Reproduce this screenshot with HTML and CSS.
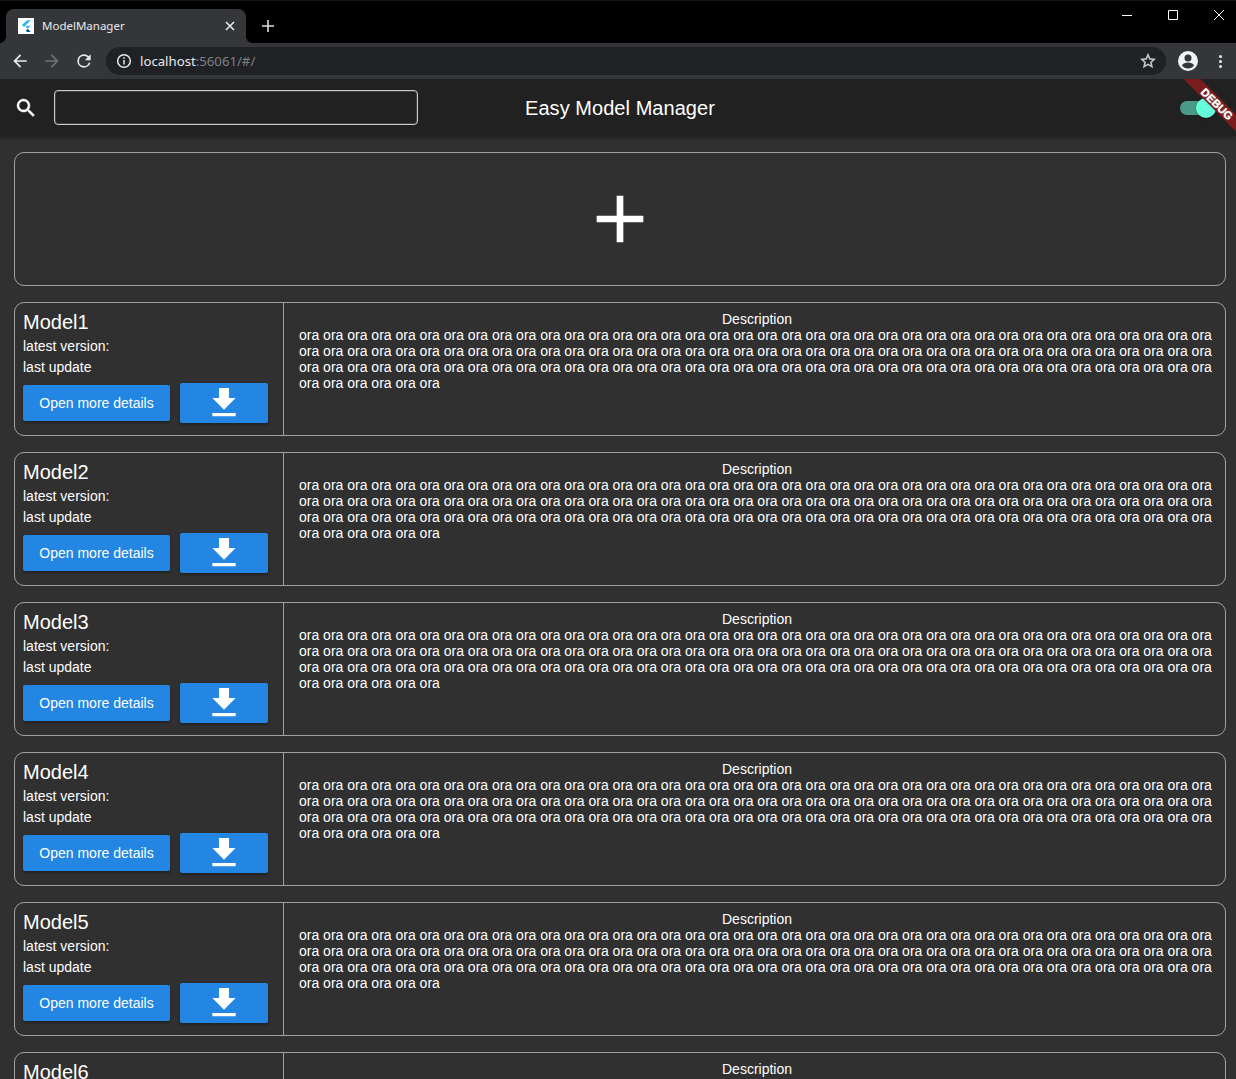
FILE: index.html
```html
<!DOCTYPE html>
<html lang="en">

<head>
    <meta charset="UTF-8">
    <meta name="viewport" content="width=device-width, initial-scale=1.0">
    <title>ModelManager</title>
    <link rel="stylesheet" href="styles.css">
</head>

<body>
    <svg class="icon-defs" width="0" height="0">
        <symbol id="download" viewBox="0 0 24 24"><path d="M19 9h-4V3H9v6H5l7 7 7-7zM5 18v2h14v-2H5z" /></symbol>
    </svg>

    <div class="tabstrip">
        <div class="tab">
            <span class="favicon">
                <svg width="16" height="16" viewBox="0 0 16 16">
                    <path fill="#29b6f6" d="M9 2.300h3.700L6 9 4 7.100z" />
                    <path fill="#29b6f6" d="M8.900 7.800h3.800l-2.900 3-2-1.900z" />
                    <path fill="#01579b" d="M7.800 12.600l2-1.800 2.900 3.200H9z" />
                </svg>
            </span>
            <span class="tab-title">ModelManager</span>
            <svg class="tab-close" width="10" height="10" viewBox="0 0 10 10">
                <path d="M1 1l8 8M9 1l-8 8" />
            </svg>
        </div>
        <svg class="new-tab" width="12" height="12" viewBox="0 0 12 12">
            <path d="M6 0v12M0 6h12" />
        </svg>
        <div class="window-controls">
            <svg width="10" height="10" viewBox="0 0 10 10"><path d="M0 5.500h10" /></svg>
            <svg width="10" height="10" viewBox="0 0 10 10"><path d="M.5.500h9v9h-9z" /></svg>
            <svg width="10" height="10" viewBox="0 0 10 10"><path d="M0 0l10 10M10 0L0 10" /></svg>
        </div>
    </div>

    <div class="toolbar">
        <svg class="nav-icon" width="24" height="24" viewBox="0 0 24 24"><path d="M20 11H7.800l5.600-5.600L12 4l-8 8 8 8 1.400-1.400L7.800 13H20z" /></svg>
        <svg class="nav-icon nav-disabled" width="24" height="24" viewBox="0 0 24 24"><path d="M4 11h12.200l-5.600-5.600L12 4l8 8-8 8-1.400-1.400 5.600-5.600H4z" /></svg>
        <svg class="nav-icon" width="24" height="24" viewBox="0 0 24 24"><path d="M17.650 6.350A7.958 7.958 0 0 0 12 4a8 8 0 1 0 7.730 10h-2.080A6 6 0 1 1 12 6c1.660 0 3.140.69 4.220 1.780L13 11h7V4l-2.350 2.350z" /></svg>
        <div class="omnibox">
            <svg class="info-icon" width="16" height="16" viewBox="0 0 16 16">
                <circle cx="8" cy="8" r="6.300" />
                <path d="M8 7v4.500M8 4.300v1.500" />
            </svg>
            <span class="url-host">localhost</span><span class="url-rest">:56061/#/</span>
            <svg class="star-icon" width="16" height="16" viewBox="0 0 16 16">
                <path d="M8 1.800l1.800 4.100 4.500.400-3.400 3 1 4.400L8 11.400l-3.900 2.300 1-4.400-3.400-3 4.500-.400z" />
            </svg>
        </div>
        <svg class="avatar" width="20" height="20" viewBox="0 0 20 20">
            <circle cx="10" cy="10" r="10" fill="#f1f3f4" />
            <circle cx="10" cy="7" r="3.500" fill="#35363a" />
            <path fill="#35363a" d="M4 14.500c1-2.300 3.500-3 6-3s5 .7 6 3c-1.300 1.700-3.500 3-6 3s-4.700-1.300-6-3z" />
        </svg>
        <span class="menu-dots"><i></i><i></i><i></i></span>
    </div>

    <header class="appbar">
        <svg class="search-icon" width="24" height="24" viewBox="0 0 24 24"><path d="M15.500 14h-.79l-.28-.27A6.471 6.471 0 0 0 16 9.500 6.500 6.500 0 1 0 9.500 16c1.610 0 3.090-.59 4.230-1.570l.27.28v.79l5 4.990L20.490 19l-4.990-5zm-6 0C7.010 14 5 11.990 5 9.500S7.010 5 9.500 5 14 7.010 14 9.500 11.990 14 9.500 14z" /></svg>
        <div class="search-box"></div>
        <h1 class="app-title">Easy Model Manager</h1>
        <div class="switch"><span class="switch-track"></span><span class="switch-thumb"></span></div>
        <div class="debug-banner">DEBUG</div>
    </header>

    <main class="content">
        <div class="add-card">
            <svg width="80" height="80" viewBox="0 0 24 24"><path d="M19 13h-6v6h-2v-6H5v-2h6V5h2v6h6v2z" /></svg>
        </div>

        <section class="model-card">
            <div class="model-info">
                <h2 class="model-name">Model1</h2>
                <p class="model-meta">latest version:</p>
                <p class="model-meta">last update</p>
                <div class="model-actions">
                    <button class="btn-details">Open more details</button>
                    <button class="btn-download"><svg width="40" height="40"><use href="#download" /></svg></button>
                </div>
            </div>
            <div class="model-desc">
                <div class="desc-title">Description</div>
                <p class="desc-text">ora ora ora ora ora ora ora ora ora ora ora ora ora ora ora ora ora ora ora ora ora ora ora ora ora ora ora ora ora ora ora ora ora ora ora ora ora ora ora ora ora ora ora ora ora ora ora ora ora ora ora ora ora ora ora ora ora ora ora ora ora ora ora ora ora ora ora ora ora ora ora ora ora ora ora ora ora ora ora ora ora ora ora ora ora ora ora ora ora ora ora ora ora ora ora ora ora ora ora ora ora ora ora ora ora ora ora ora ora ora ora ora ora ora ora ora ora ora ora ora</p>
            </div>
        </section>

        <section class="model-card">
            <div class="model-info">
                <h2 class="model-name">Model2</h2>
                <p class="model-meta">latest version:</p>
                <p class="model-meta">last update</p>
                <div class="model-actions">
                    <button class="btn-details">Open more details</button>
                    <button class="btn-download"><svg width="40" height="40"><use href="#download" /></svg></button>
                </div>
            </div>
            <div class="model-desc">
                <div class="desc-title">Description</div>
                <p class="desc-text">ora ora ora ora ora ora ora ora ora ora ora ora ora ora ora ora ora ora ora ora ora ora ora ora ora ora ora ora ora ora ora ora ora ora ora ora ora ora ora ora ora ora ora ora ora ora ora ora ora ora ora ora ora ora ora ora ora ora ora ora ora ora ora ora ora ora ora ora ora ora ora ora ora ora ora ora ora ora ora ora ora ora ora ora ora ora ora ora ora ora ora ora ora ora ora ora ora ora ora ora ora ora ora ora ora ora ora ora ora ora ora ora ora ora ora ora ora ora ora ora</p>
            </div>
        </section>

        <section class="model-card">
            <div class="model-info">
                <h2 class="model-name">Model3</h2>
                <p class="model-meta">latest version:</p>
                <p class="model-meta">last update</p>
                <div class="model-actions">
                    <button class="btn-details">Open more details</button>
                    <button class="btn-download"><svg width="40" height="40"><use href="#download" /></svg></button>
                </div>
            </div>
            <div class="model-desc">
                <div class="desc-title">Description</div>
                <p class="desc-text">ora ora ora ora ora ora ora ora ora ora ora ora ora ora ora ora ora ora ora ora ora ora ora ora ora ora ora ora ora ora ora ora ora ora ora ora ora ora ora ora ora ora ora ora ora ora ora ora ora ora ora ora ora ora ora ora ora ora ora ora ora ora ora ora ora ora ora ora ora ora ora ora ora ora ora ora ora ora ora ora ora ora ora ora ora ora ora ora ora ora ora ora ora ora ora ora ora ora ora ora ora ora ora ora ora ora ora ora ora ora ora ora ora ora ora ora ora ora ora ora</p>
            </div>
        </section>

        <section class="model-card">
            <div class="model-info">
                <h2 class="model-name">Model4</h2>
                <p class="model-meta">latest version:</p>
                <p class="model-meta">last update</p>
                <div class="model-actions">
                    <button class="btn-details">Open more details</button>
                    <button class="btn-download"><svg width="40" height="40"><use href="#download" /></svg></button>
                </div>
            </div>
            <div class="model-desc">
                <div class="desc-title">Description</div>
                <p class="desc-text">ora ora ora ora ora ora ora ora ora ora ora ora ora ora ora ora ora ora ora ora ora ora ora ora ora ora ora ora ora ora ora ora ora ora ora ora ora ora ora ora ora ora ora ora ora ora ora ora ora ora ora ora ora ora ora ora ora ora ora ora ora ora ora ora ora ora ora ora ora ora ora ora ora ora ora ora ora ora ora ora ora ora ora ora ora ora ora ora ora ora ora ora ora ora ora ora ora ora ora ora ora ora ora ora ora ora ora ora ora ora ora ora ora ora ora ora ora ora ora ora</p>
            </div>
        </section>

        <section class="model-card">
            <div class="model-info">
                <h2 class="model-name">Model5</h2>
                <p class="model-meta">latest version:</p>
                <p class="model-meta">last update</p>
                <div class="model-actions">
                    <button class="btn-details">Open more details</button>
                    <button class="btn-download"><svg width="40" height="40"><use href="#download" /></svg></button>
                </div>
            </div>
            <div class="model-desc">
                <div class="desc-title">Description</div>
                <p class="desc-text">ora ora ora ora ora ora ora ora ora ora ora ora ora ora ora ora ora ora ora ora ora ora ora ora ora ora ora ora ora ora ora ora ora ora ora ora ora ora ora ora ora ora ora ora ora ora ora ora ora ora ora ora ora ora ora ora ora ora ora ora ora ora ora ora ora ora ora ora ora ora ora ora ora ora ora ora ora ora ora ora ora ora ora ora ora ora ora ora ora ora ora ora ora ora ora ora ora ora ora ora ora ora ora ora ora ora ora ora ora ora ora ora ora ora ora ora ora ora ora ora</p>
            </div>
        </section>

        <section class="model-card">
            <div class="model-info">
                <h2 class="model-name">Model6</h2>
            </div>
            <div class="model-desc">
                <div class="desc-title">Description</div>
            </div>
        </section>
    </main>
</body>

</html>
```

FILE: styles.css
```css
body {
    margin: 0;
    height: 1079px;
    overflow: hidden;
    background-color: #303030;
    color: #fff;
    font-family: "Liberation Sans", Arial, sans-serif;
}

.icon-defs {
    position: absolute;
}

/* browser chrome */
.tabstrip {
    display: flex;
    align-items: flex-end;
    height: 43px;
    background-color: #000;
    position: relative;
    box-sizing: border-box;
    padding-left: 6px;
    border-top: 1px solid #141414;
}

.tab {
    position: relative;
    display: flex;
    align-items: center;
    width: 240px;
    height: 34px;
    box-sizing: border-box;
    padding: 0 12px;
    background-color: #35363a;
    border-radius: 8px 8px 0 0;
}

.tab::before,
.tab::after {
    content: "";
    position: absolute;
    bottom: 0;
    width: 6px;
    height: 6px;
}

.tab::before {
    left: -6px;
    background: radial-gradient(circle at 0 0, #000 5.5px, #35363a 6px);
}

.tab::after {
    right: -6px;
    background: radial-gradient(circle at 100% 0, #000 5.5px, #35363a 6px);
}

.favicon {
    display: flex;
    width: 16px;
    height: 16px;
    background-color: #fff;
}

.tab-title {
    flex: 1;
    margin-left: 8px;
    margin-bottom: 1px;
    font-family: "Noto Sans", "Open Sans", sans-serif;
    font-size: 11.500px;
    color: #e8eaed;
}

.tab-close {
    fill: none;
    stroke: #e8eaed;
    stroke-width: 1.600;
    margin-right: -1px;
}

.new-tab {
    fill: none;
    stroke: #dadce0;
    stroke-width: 1.600;
    margin: 0 0 11px 16px;
}

.window-controls {
    position: absolute;
    top: 9px;
    right: 12px;
    display: flex;
    align-items: center;
    gap: 36px;
}

.window-controls svg {
    fill: none;
    stroke: #fff;
    stroke-width: 1;
}

.toolbar {
    display: flex;
    align-items: center;
    height: 36px;
    background-color: #35363a;
    padding: 0 14px 0 10px;
}

.nav-icon {
    width: 20px;
    height: 20px;
    fill: #e8eaed;
    margin-right: 12px;
}

.nav-icon.nav-disabled {
    fill: #6f7073;
}

.omnibox {
    flex: 1;
    display: flex;
    align-items: center;
    height: 28px;
    margin: 0 12px 0 0;
    padding: 0 10px;
    background-color: #202124;
    border-radius: 14px;
    font-family: "Noto Sans", "Open Sans", sans-serif;
    font-size: 13.200px;
}

.info-icon {
    fill: none;
    stroke: #e8eaed;
    stroke-width: 1.500;
    margin-right: 8px;
}

.url-host {
    color: #e8eaed;
}

.url-rest {
    color: #7d8084;
}

.star-icon {
    margin-left: auto;
    fill: none;
    stroke: #c4c6c9;
    stroke-width: 1.600;
}

.avatar {
    margin-right: 21px;
}

.menu-dots {
    display: flex;
    flex-direction: column;
    gap: 2px;
}

.menu-dots i {
    width: 3px;
    height: 3px;
    border-radius: 50%;
    background-color: #e8eaed;
}

/* app bar */
.appbar {
    position: relative;
    display: flex;
    align-items: center;
    height: 57px;
    padding-left: 14px;
    background-color: #212121;
    box-shadow: 0 2px 4px rgba(0, 0, 0, 0.3);
    overflow: hidden;
}

.search-icon {
    fill: #fff;
    stroke: #fff;
    stroke-width: 0.500;
}

.search-box {
    width: 362px;
    height: 33px;
    margin-left: 16px;
    border: 1px solid #cccccc;
    border-radius: 4px;
    box-shadow: inset 0 0 0 1px rgba(255, 255, 255, 0.15);
}

.app-title {
    position: absolute;
    left: 4px;
    right: 0;
    top: 18px;
    margin: 0;
    text-align: center;
    font-size: 20px;
    font-weight: 400;
    letter-spacing: 0.050px;
}

.switch {
    position: absolute;
    top: 19px;
    right: 20px;
    width: 38px;
    height: 20px;
}

.switch-track {
    position: absolute;
    left: 2px;
    top: 3px;
    width: 34px;
    height: 14px;
    border-radius: 7px;
    background-color: #4a9a89;
}

.switch-thumb {
    position: absolute;
    right: 0;
    top: 0;
    width: 20px;
    height: 20px;
    border-radius: 50%;
    background-color: #64ffda;
    box-shadow: 0 1px 2px rgba(0, 0, 0, 0.3);
}

.debug-banner {
    position: absolute;
    top: 19px;
    right: -31px;
    width: 100px;
    height: 12px;
    line-height: 12px;
    text-align: center;
    background-color: #7a1c1c;
    color: #fff;
    font-size: 11px;
    font-weight: 700;
    text-shadow: 0 0 1px #fff;
    transform: rotate(45deg);
}

/* list */
.content {
    display: flex;
    flex-direction: column;
    gap: 16px;
    padding: 16px 10px 0 14px;
}

.add-card {
    display: flex;
    align-items: center;
    justify-content: center;
    flex: none;
    height: 134px;
    box-sizing: border-box;
    border: 1px solid #a0a0a0;
    border-radius: 10px;
}

.add-card svg {
    fill: #fff;
}

.model-card {
    display: flex;
    flex: none;
    height: 134px;
    box-sizing: border-box;
    border: 1px solid #a0a0a0;
    border-radius: 10px;
}

.model-info {
    width: 269px;
    box-sizing: border-box;
    padding: 7px 0 0 8px;
    border-right: 1px solid #a0a0a0;
}

.model-name {
    height: 23px;
    margin: 0;
    font-size: 20px;
    font-weight: 400;
    line-height: 24px;
}

.model-meta {
    margin: 5px 0 0;
    font-size: 14px;
    line-height: 16px;
}

.model-actions {
    display: flex;
    align-items: center;
    gap: 10px;
    margin-top: 8px;
}

.btn-details,
.btn-download {
    border: none;
    border-radius: 2px;
    background-color: #2286e2;
    color: #fff;
    font-family: inherit;
    box-shadow: 0 2px 3px rgba(0, 0, 0, 0.3);
}

.btn-details {
    width: 147px;
    height: 36px;
    padding: 0;
    font-size: 14px;
}

.btn-download {
    display: flex;
    align-items: center;
    justify-content: center;
    width: 88px;
    height: 40px;
    padding: 0;
    fill: #fff;
}

.model-desc {
    flex: 1;
    padding: 8px 10px 0 15px;
    font-size: 14px;
    line-height: 16px;
}

.desc-title {
    text-align: center;
}

.desc-text {
    margin: 0;
}
```
